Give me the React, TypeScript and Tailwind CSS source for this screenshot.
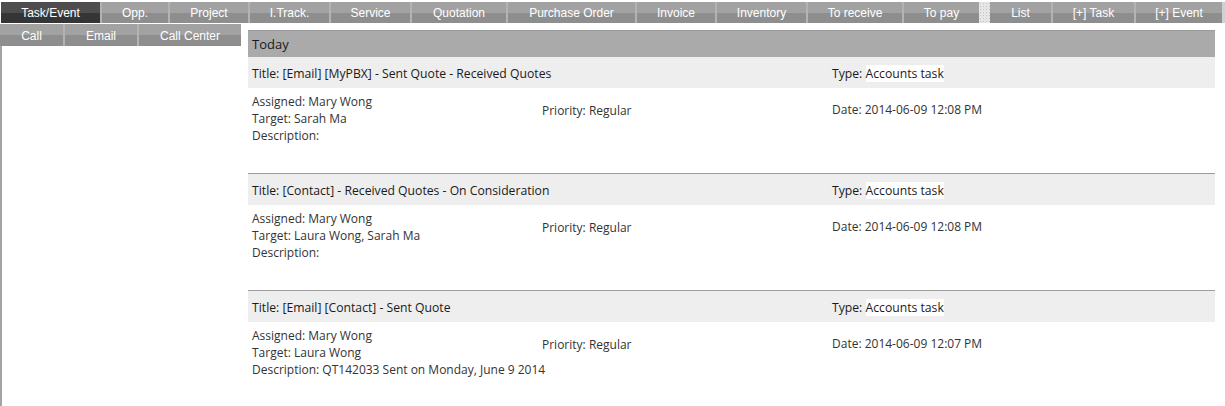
import React from 'react'

interface Tab {
  label: string
  width: number
  active?: boolean
}

interface TaskItem {
  title: string
  assigned: string
  target: string
  description: string
  priority: string
  type: string
  date: string
}

const topTabs: Tab[] = [
  { label: 'Task/Event', width: 99, active: true },
  { label: 'Opp.', width: 66 },
  { label: 'Project', width: 78 },
  { label: 'I.Track.', width: 79 },
  { label: 'Service', width: 79 },
  { label: 'Quotation', width: 94 },
  { label: 'Purchase Order', width: 127 },
  { label: 'Invoice', width: 78 },
  { label: 'Inventory', width: 89 },
  { label: 'To receive', width: 94 },
  { label: 'To pay', width: 75 },
]

const rightTabs: Tab[] = [
  { label: 'List', width: 61 },
  { label: '[+] Task', width: 81 },
  { label: '[+] Event', width: 86 },
]

const subTabs: Tab[] = [
  { label: 'Call', width: 63 },
  { label: 'Email', width: 72 },
  { label: 'Call Center', width: 102 },
]

const tasks: TaskItem[] = [
  {
    title: 'Title: [Email] [MyPBX] - Sent Quote - Received Quotes',
    assigned: 'Mary Wong',
    target: 'Sarah Ma',
    description: '',
    priority: 'Regular',
    type: 'Accounts task',
    date: '2014-06-09 12:08 PM',
  },
  {
    title: 'Title: [Contact] - Received Quotes - On Consideration',
    assigned: 'Mary Wong',
    target: 'Laura Wong, Sarah Ma',
    description: '',
    priority: 'Regular',
    type: 'Accounts task',
    date: '2014-06-09 12:08 PM',
  },
  {
    title: 'Title: [Email] [Contact] - Sent Quote',
    assigned: 'Mary Wong',
    target: 'Laura Wong',
    description: 'QT142033 Sent on Monday, June 9 2014',
    priority: 'Regular',
    type: 'Accounts task',
    date: '2014-06-09 12:07 PM',
  },
]

function TabButton({ tab, height }: { tab: Tab; height: string }) {
  return (
    <div
      style={{ width: tab.width }}
      className={`relative flex shrink-0 items-center justify-center pt-[1px] ${height} ${
        tab.active
          ? 'bg-[linear-gradient(#4e4e4e_0%,#4e4e4e_52%,#353535_52%,#353535_100%)]'
          : 'bg-[linear-gradient(#a2a2a2_0%,#a2a2a2_52%,#8e8e8e_52%,#8e8e8e_100%)]'
      } text-[12px] text-white font-['Liberation_Sans',Arial,sans-serif] leading-none`}
    >
      {tab.label}
    </div>
  )
}

function TaskBlock({ task, first }: { task: TaskItem; first: boolean }) {
  return (
    <div className={first ? '' : 'border-t border-[#9c9c9c]'}>
      <div className="flex h-[31px] items-center bg-[#eeeeee] pt-[4px] text-[12.2px] text-[#1a1a1a]">
        <div className="w-[580px] pl-[4px]">{task.title}</div>
        <div className="pl-[4px]">
          Type: <span className="bg-white">{task.type}</span>
        </div>
      </div>
      <div className="flex h-[85px] text-[#333333]">
        <div className="w-[290px] whitespace-nowrap pl-[4px] pt-[5px] leading-[17px]">
          <div>Assigned: {task.assigned}</div>
          <div>Target: {task.target}</div>
          <div>
            Description:{task.description ? ` ${task.description}` : ''}
          </div>
        </div>
        <div className="w-[290px] pl-[4px] pt-[14px] leading-[17px]">
          Priority: {task.priority}
        </div>
        <div className="pl-[4px] pt-[13px] leading-[17px]">Date: {task.date}</div>
      </div>
    </div>
  )
}

export default function App() {
  return (
    <div className="h-[406px] w-[1225px] overflow-hidden bg-white">
      {/* top navigation */}
      <div className="flex h-[24px] pt-[2px] pl-[1px]">
        <div className="flex h-[21px] gap-[2px] bg-[#b3b3b3]">
          {topTabs.map(tab => (
            <TabButton key={tab.label} tab={tab} height="h-[21px]" />
          ))}
        </div>
        <div className="h-[21px] w-[11px] shrink-0 bg-[#e6e6e6] bg-[radial-gradient(#c4c4c4_0.8px,transparent_1px)] bg-[length:3px_3px]" />
        <div className="flex h-[21px] gap-[2px] bg-[#b3b3b3]">
          {rightTabs.map(tab => (
            <TabButton key={tab.label} tab={tab} height="h-[21px]" />
          ))}
        </div>
        <div className="h-[21px] w-[3px] bg-[#d0d0d0]" />
      </div>

      <div className="flex">
        {/* left column */}
        <div className="flex h-[382px] w-[248px] shrink-0 flex-col">
          <div className="flex h-[22px] w-[241px] gap-[2px] bg-[#b3b3b3]">
            {subTabs.map(tab => (
              <TabButton key={tab.label} tab={tab} height="h-[22px]" />
            ))}
          </div>
          <div className="flex-1 border-l-2 border-[#a4a4a4]" />
        </div>

        {/* content */}
        <div className="mt-[6px] w-[967px] font-['Open_Sans','Noto_Sans',sans-serif] text-[12px]">
          <div className="flex h-[27px] items-center border-t border-[#999999] bg-[#aaaaaa] pl-[4px] pt-[1px] text-[13px] text-[#1a1a1a]">
            Today
          </div>
          {tasks.map((task, i) => (
            <TaskBlock key={i} task={task} first={i === 0} />
          ))}
        </div>
      </div>
    </div>
  )
}
